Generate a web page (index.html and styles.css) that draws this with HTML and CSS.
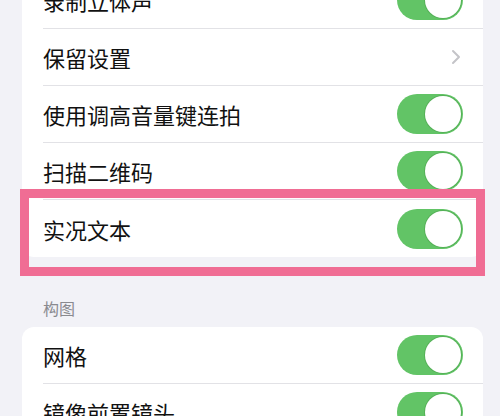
FILE: index.html
```html
<!DOCTYPE html>
<html lang="zh-CN">
<head>
  <meta charset="UTF-8">
  <title>相机设置</title>
  <meta name="viewport" content="width=device-width, initial-scale=1">
  <link rel="stylesheet" href="styles.css">
</head>
<body>
<div class="page">
  <!-- 相机设置 -->
  <div class="card first">
    <div class="row"><div class="row-inner"><span class="label">录制立体声</span><span class="switch on"><span class="knob"></span></span></div></div>
    <div class="row"><div class="row-inner"><span class="label">保留设置</span>
      <svg class="chevron" width="10" height="16" viewBox="0 0 10 16"><polyline points="2,2 8,8 2,14" fill="none" stroke="#c4c4c8" stroke-width="2" stroke-linecap="round" stroke-linejoin="round"/></svg>
    </div></div>
    <div class="row"><div class="row-inner"><span class="label">使用调高音量键连拍</span><span class="switch on"><span class="knob"></span></span></div></div>
    <div class="row"><div class="row-inner"><span class="label">扫描二维码</span><span class="switch on"><span class="knob"></span></span></div></div>
    <div class="row last"><div class="row-inner"><span class="label">实况文本</span><span class="switch on"><span class="knob"></span></span></div></div>
  </div>

  <div class="section-title">构图</div>
  <div class="card">
    <div class="row"><div class="row-inner"><span class="label">网格</span><span class="switch on"><span class="knob"></span></span></div></div>
    <div class="row"><div class="row-inner"><span class="label">镜像前置镜头</span><span class="switch on"><span class="knob"></span></span></div></div>
  </div>

  <!-- highlight -->
  <div class="highlight"></div>
</div>
</body>
</html>
```

FILE: styles.css
```css
:root{
  --bg:#f2f2f7;
  --card:#ffffff;
  --text:#111111;
  --muted:#8a8a8f;
  --line:#e2e2e6;
  --green:#62c466;
  --pink:#f06d94;
}
*{box-sizing:border-box;margin:0;padding:0}
body{background:var(--bg);color:var(--text);font-family:"Noto Sans CJK SC","Noto Sans",sans-serif;overflow:hidden}
.page{position:relative;display:flow-root;width:500px;height:416px;overflow:hidden}
.card{background:var(--card);margin:0 17px 0 22px;border-radius:12px;overflow:hidden}
.card.first{margin-top:-28px}
.row{padding-left:21px}
.row-inner{height:57px;display:flex;align-items:center;justify-content:space-between;padding-right:20px;border-bottom:1px solid var(--line)}
.row.last .row-inner{border-bottom:none}
.label{font-size:22px;line-height:30px}
.switch{width:66px;height:40px;border-radius:20px;background:var(--green);display:flex;align-items:center;justify-content:flex-end;padding:2px}
.knob{width:36px;height:36px;border-radius:50%;background:#fff;box-shadow:0 0 0 1px rgba(60,140,60,.35)}
.chevron{margin-right:2px}
.section-title{padding:41px 0 9px 43px;font-size:16px;line-height:20px;color:var(--muted)}
.highlight{position:absolute;left:20px;top:189px;width:465px;height:87px;border:9px solid var(--pink)}
```
